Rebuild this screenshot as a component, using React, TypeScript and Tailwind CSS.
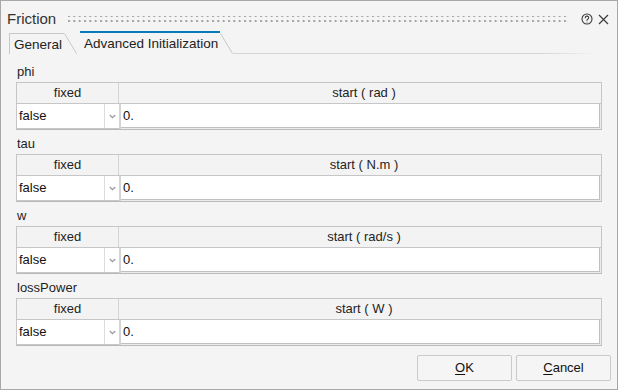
import React from 'react';

type Param = { name: string; unit: string };

const params: Param[] = [
  { name: 'phi', unit: 'rad' },
  { name: 'tau', unit: 'N.m' },
  { name: 'w', unit: 'rad/s' },
  { name: 'lossPower', unit: 'W' },
];

const Grip = () => (
  <svg className="flex-1 h-[8px] mx-[12px]" preserveAspectRatio="none">
    <defs>
      <pattern id="dots" width="5.333" height="5" patternUnits="userSpaceOnUse">
        <rect x="0" y="0" width="2" height="2" fill="#a3a3a3" />
      </pattern>
    </defs>
    <rect x="0" y="1" width="100%" height="7" fill="url(#dots)" />
  </svg>
);

const HelpIcon = () => (
  <svg width="12" height="12" viewBox="0 0 12 12" fill="none" stroke="#3c3c3c" strokeWidth="1.1">
    <circle cx="6" cy="6" r="5" />
    <path d="M4.3 4.8a1.7 1.6 0 1 1 2.4 1.4c-.5.3-.7.6-.7 1.1" strokeLinecap="round" />
    <circle cx="6" cy="8.9" r=".5" fill="#3c3c3c" stroke="none" />
  </svg>
);

const CloseIcon = () => (
  <svg width="11" height="11" viewBox="0 0 11 11" stroke="#3c3c3c" strokeWidth="1.2">
    <path d="M1 1l9 9M10 1l-9 9" />
  </svg>
);

const Chevron = () => (
  <svg width="7" height="5" viewBox="0 0 7 5" fill="none" stroke="#9a9a9a" strokeWidth="1.3">
    <path d="M0.8 1l2.7 2.7L6.2 1" />
  </svg>
);

const TabEdge = ({ h }: { h: number }) => (
  <svg width="13" height={h} viewBox={`0 0 13 ${h}`} className="shrink-0">
    <path d={`M0.5 ${h - 20.5}L12.5 ${h - 0.5}`} stroke="#c8c8c8" strokeWidth="1" fill="none" />
  </svg>
);

const ParamTable = ({ p }: { p: Param }) => (
  <div className="flex flex-col">
    <div className="h-[18px] leading-[18px] pl-[1px] text-[13px] text-[#1e1e1e]">{p.name}</div>
    <div className="mt-[1px] border border-[#c6c6c6] border-b-[#b9b9b9] flex flex-col">
      <div className="grid grid-cols-[102px_1fr] h-[21px] bg-[#f3f3f3] border-b border-[#c6c6c6] text-[13px] text-[#1e1e1e] leading-[20px]">
        <div className="border-r border-[#d4d4d4] text-center">fixed</div>
        <div className="text-center pl-[8px]">start ( {p.unit} )</div>
      </div>
      <div className="grid grid-cols-[102px_1fr] h-[25px] bg-[#ececec] text-[13px] text-[#111]">
        <div className="flex bg-white border-b border-[#c6c6c6] pl-[1px]">
          <div className="flex-1 leading-[23px] pl-[1px]">false</div>
          <div className="w-[15px] border-l border-[#dcdcdc] flex items-center justify-center">
            <Chevron />
          </div>
        </div>
        <div className="border-l-2 border-[#d4d4d4] pr-[1px] pb-[1px]">
          <div className="h-full bg-white border-b border-r border-[#c0c0c0] leading-[23px] pl-[2px]">0.</div>
        </div>
      </div>
    </div>
  </div>
);

export default function App() {
  return (
    <div className="w-[618px] h-[390px] bg-[#f4f4f4] border border-[#a8a8a8] flex flex-col font-['Liberation_Sans',Arial,sans-serif] overflow-hidden">
      {/* title bar */}
      <div className="h-[30px] flex items-start pt-[7px] pl-[6px] pr-[8px]">
        <span className="text-[15px] leading-[22px] text-[#333]">Friction</span>
        <div className="flex-1 flex items-center h-[22px]">
          <Grip />
        </div>
        <div className="flex items-center gap-[5px] h-[22px]">
          <HelpIcon />
          <CloseIcon />
        </div>
      </div>

      {/* tabs */}
      <div className="h-[23px] flex items-end pl-[8px] pr-[18px]">
        <div className="flex items-end h-[21px]">
          <div className="h-[21px] border-l border-t border-[#c8c8c8] pl-[4px] pr-[2px] text-[13.5px] leading-[21px] text-[#222]">
            General
          </div>
          <TabEdge h={21} />
        </div>
        <div className="flex items-end h-[23px] ml-[3px]">
          <div className="h-[23px] border-t-2 border-[#0a7ab8] pl-[4px] pr-[2px] text-[13.5px] leading-[21px] text-[#222]">
            Advanced Initialization
          </div>
          <TabEdge h={22} />
        </div>
        <div className="flex-1 h-px bg-gradient-to-r from-[#d6d6d6] from-85% to-[#f4f4f4]" />
      </div>

      {/* content */}
      <div className="flex-1 flex flex-col gap-[5px] px-[15px] pt-[9px]">
        {params.map((p) => (
          <ParamTable key={p.name} p={p} />
        ))}
      </div>

      {/* buttons */}
      <div className="flex justify-end gap-[4px] pr-[6px] pb-[8px]">
        <button className="w-[95px] h-[26px] rounded-[2px] border border-[#cacaca] bg-[#f5f5f5] text-[13px] text-[#111]">
          <span className="underline underline-offset-2">O</span>K
        </button>
        <button className="w-[95px] h-[26px] rounded-[2px] border border-[#cacaca] bg-[#f5f5f5] text-[13px] text-[#111]">
          <span className="underline underline-offset-2">C</span>ancel
        </button>
      </div>
    </div>
  );
}
